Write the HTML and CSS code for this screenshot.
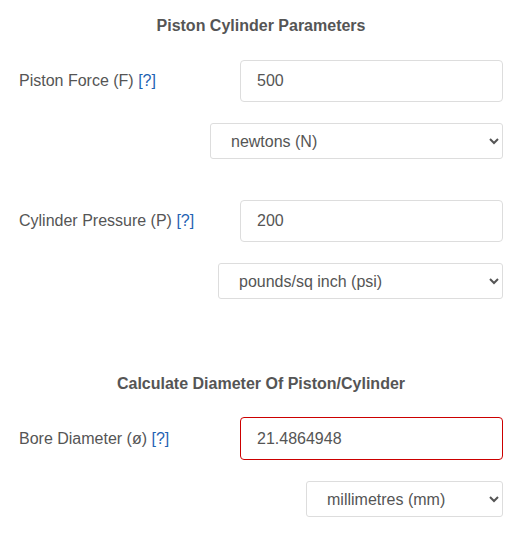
FILE: index.html
```html
<!DOCTYPE html>
<html lang="en">
<head>
  <meta charset="UTF-8" />
  <meta name="viewport" content="width=device-width, initial-scale=1.0" />
  <title>Piston Cylinder Calculator</title>
  <link rel="stylesheet" href="styles.css">
</head>
<body>

  <div class="calc">
    <!-- Inputs -->
    <h3 class="section-title">Piston Cylinder Parameters</h3>

    <div class="param">
      <div class="field">
        <label for="force">Piston Force (F) <a href="#" class="help">[?]</a></label>
        <input type="text" id="force" value="500">
      </div>
      <div class="unit">
        <select class="unit-force">
          <option>newtons (N)</option>
          <option>kilonewtons (kN)</option>
          <option>pounds-force (lbf)</option>
        </select>
      </div>
    </div>

    <div class="param">
      <div class="field">
        <label for="pressure">Cylinder Pressure (P) <a href="#" class="help">[?]</a></label>
        <input type="text" id="pressure" value="200">
      </div>
      <div class="unit">
        <select class="unit-pressure">
          <option>pounds/sq inch (psi)</option>
          <option>bar</option>
          <option>megapascals (MPa)</option>
        </select>
      </div>
    </div>

    <!-- Result -->
    <h3 class="section-title result-title">Calculate Diameter Of Piston/Cylinder</h3>

    <div class="param">
      <div class="field">
        <label for="bore">Bore Diameter (&oslash;) <a href="#" class="help">[?]</a></label>
        <input type="text" id="bore" class="result" value="21.4864948" readonly>
      </div>
      <div class="unit">
        <select class="unit-length">
          <option>millimetres (mm)</option>
          <option>inches (in)</option>
        </select>
      </div>
    </div>
  </div>

</body>
</html>
```

FILE: styles.css
```css
* {
  box-sizing: border-box;
}

body {
  margin: 0;
  background: #fff;
  font-family: "Liberation Sans", Arial, sans-serif;
  color: #555;
}

.calc {
  padding: 0 12px 0 19px;
}

.section-title {
  margin: 16px 0 24px;
  font-size: 16px;
  line-height: 20px;
  font-weight: bold;
  text-align: center;
  color: #555;
}

.result-title {
  margin-top: 75px;
  margin-bottom: 23px;
}

.param + .param {
  margin-top: 41px;
}

.field {
  display: flex;
  align-items: center;
}

.field label {
  width: 221px;
  font-size: 16px;
  line-height: 20px;
  color: #555;
}

.help {
  color: #1f63b3;
  text-decoration: none;
}

.field input {
  flex: 1;
  height: 42px;
  padding: 0 16px;
  border: 1px solid #ddd;
  border-radius: 4px;
  font-family: inherit;
  font-size: 16px;
  color: #555;
  outline: none;
}

.field input.result {
  height: 43px;
  border-color: #cc0000;
}

.unit {
  display: flex;
  justify-content: flex-end;
  margin-top: 21px;
}

.unit select {
  height: 36px;
  padding: 0 6px 0 16px;
  border: 1px solid #ddd;
  border-radius: 3px;
  background: #fff;
  font-family: inherit;
  font-size: 16px;
  color: #555;
}

.unit-force {
  width: 293px;
}

.unit-pressure {
  width: 285px;
}

.unit-length {
  width: 197px;
}
```
